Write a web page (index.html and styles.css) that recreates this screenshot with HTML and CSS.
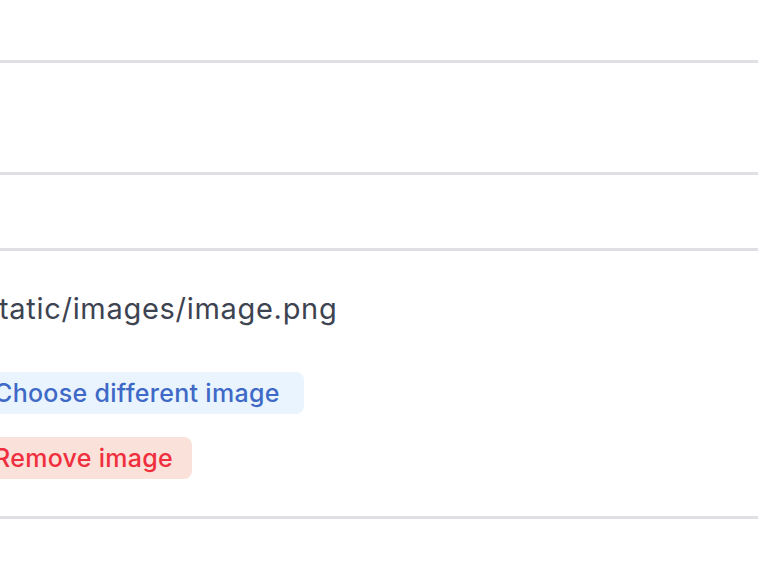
FILE: index.html
```html
<!DOCTYPE html>
<html>
<head>
<meta charset="utf-8">
<link rel="stylesheet" href="styles.css">
</head>
<body>
<div class="page">
  <div class="row row-1"></div>
  <div class="row row-2"></div>
  <div class="row row-3"></div>
  <div class="row row-4">
    <div class="image-field">
      <div class="path">static/images/image.png</div>
      <div class="actions">
        <button class="btn btn-choose">Choose different image</button>
        <button class="btn btn-remove">Remove image</button>
      </div>
    </div>
  </div>
  <div class="row row-5"></div>
</div>
</body>
</html>
```
FILE: styles.css
```css
html, body {
  margin: 0;
  padding: 0;
  background: #ffffff;
  overflow: hidden;
}
.page {
  width: 758px;
  height: 572px;
  font-family: Inter, "Noto Sans", sans-serif;
}
.row {
  border-bottom: 3px solid #dfdfe4;
}
.row-1 { height: 60px; }
.row-2 { height: 109px; }
.row-3 { height: 73px; }
.row-4 { height: 265px; }
.row-5 { border-bottom: none; }

.image-field {
  margin-left: -17px;
  padding-top: 40px;
  display: flex;
  flex-direction: column;
  align-items: flex-start;
}
.path {
  font-size: 29px;
  line-height: 36px;
  letter-spacing: 0.7px;
  color: #3d4350;
}
.actions {
  margin-top: 45px;
  display: flex;
  flex-direction: column;
  align-items: flex-start;
  gap: 23px;
  margin-left: -11px;
}
.btn {
  font-family: Inter, "Noto Sans", sans-serif;
  font-size: 25px;
  font-weight: 500;
  letter-spacing: 0.3px;
  line-height: 30px;
  padding: 6px 21px 6px 22px;
  border: none;
  border-radius: 8px;
}
.btn-choose {
  background: #e9f4fe;
  color: #3f69c6;
  padding-right: 24px;
}
.btn-remove {
  background: #fae1da;
  color: #ef2f3d;
  padding-right: 19px;
}
```
